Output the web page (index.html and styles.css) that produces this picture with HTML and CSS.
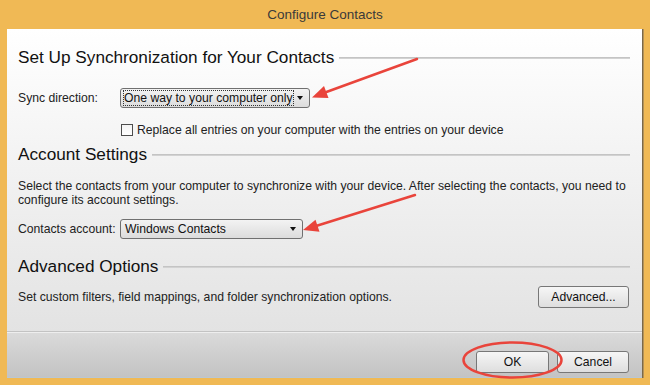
FILE: index.html
```html
<!DOCTYPE html>
<html lang="en">
<head>
    <meta charset="utf-8">
    <title>Configure Contacts</title>
    <link rel="stylesheet" href="styles.css">
</head>
<body>
    <div class="window">
        <div class="titlebar">Configure Contacts</div>
        <div class="client">
            <div class="content">
                <div class="section-head">
                    <span>Set Up Synchronization for Your Contacts</span>
                    <div class="rule"></div>
                </div>
                <div class="field-row sync-row">
                    <label class="field-label">Sync direction:</label>
                    <div class="combo combo-sync"><span class="focus-text">One way to your computer only</span><span class="combo-arrow"></span></div>
                </div>
                <div class="check-row">
                    <span class="checkbox"></span>
                    <span>Replace all entries on your computer with the entries on your device</span>
                </div>

                <div class="section-head head-account">
                    <span>Account Settings</span>
                    <div class="rule"></div>
                </div>
                <p class="desc">Select the contacts from your computer to synchronize with your device. After selecting the contacts, you need to configure its account settings.</p>
                <div class="field-row account-row">
                    <label class="field-label">Contacts account:</label>
                    <div class="combo combo-account"><span>Windows Contacts</span><span class="combo-arrow"></span></div>
                </div>

                <div class="section-head head-advanced">
                    <span>Advanced Options</span>
                    <div class="rule"></div>
                </div>
                <div class="advanced-row">
                    <span>Set custom filters, field mappings, and folder synchronization options.</span>
                    <button class="btn btn-advanced">Advanced...</button>
                </div>
            </div>
            <div class="footer">
                <button class="btn btn-ok">OK</button>
                <button class="btn btn-cancel">Cancel</button>
            </div>
        </div>
    </div>

    <!-- red annotations drawn over the screenshot -->
    <svg class="marks" width="650" height="385" viewBox="0 0 650 385">
        <g stroke="#e9443b" stroke-width="2.5" fill="none" stroke-linecap="round">
            <line x1="417" y1="59" x2="325" y2="92.5"/>
            <line x1="415" y1="195" x2="316" y2="226"/>
            <ellipse cx="512.5" cy="360" rx="49" ry="17.5"/>
        </g>
        <g fill="#e9443b">
            <polygon points="312,97.5 328.5,98 324,86"/>
            <polygon points="303,230 319.5,231.8 315.5,219.8"/>
        </g>
    </svg>
</body>
</html>
```

FILE: styles.css
```css
* {
    box-sizing: border-box;
}

body {
    margin: 0;
    width: 650px;
    height: 385px;
    background: #f0b955;
    font-family: 'Liberation Sans', Arial, sans-serif;
    font-size: 12.2px;
    color: #222;
    overflow: hidden;
}

.window {
    display: flex;
    flex-direction: column;
    height: 385px;
    padding: 0 7px 7px;
}

.titlebar {
    height: 29px;
    line-height: 30px;
    text-align: center;
    font-size: 13.5px;
    color: #3a3a3a;
}

.client {
    flex: 1;
    display: flex;
    flex-direction: column;
    border-right: 1px solid #7a6848;
    box-shadow: 1px 0 0 #b49257;
}

.content {
    flex: 1;
    padding: 18px 12px 0 11px;
    background: linear-gradient(#ffffff, #e3e3e3);
    border-bottom: 1px solid #c3c3c3;
}

.section-head {
    display: flex;
    align-items: center;
    gap: 5px;
    height: 20px;
    font-size: 17.2px;
    color: #111;
}

.rule {
    flex: 1;
    height: 2px;
    margin-top: 2px;
    background: #d2d2d2;
    border-top: 1px solid #c4c4c4;
}

.field-row {
    display: flex;
    align-items: center;
    height: 20px;
}

.field-label {
    width: 102px;
}

.sync-row {
    margin-top: 21px;
}

.combo {
    display: flex;
    align-items: center;
    justify-content: space-between;
    height: 20px;
    padding: 0 6px 0 3px;
    border: 1px solid #707070;
    border-radius: 3px;
    background: linear-gradient(#f3f3f3, #dcdcdc);
    color: #111;
}

.combo-sync {
    width: 190px;
}

.combo-account {
    width: 183px;
    padding-left: 4px;
}

.focus-text {
    outline: 1px dotted #333;
    outline-offset: 0;
    line-height: 14px;
}

.combo-arrow {
    width: 0;
    height: 0;
    border-left: 3.5px solid transparent;
    border-right: 3.5px solid transparent;
    border-top: 4px solid #111;
}

.check-row {
    display: flex;
    align-items: center;
    gap: 4px;
    height: 16px;
    margin: 14px 0 0 103px;
}

.checkbox {
    width: 12px;
    height: 12px;
    border: 1px solid #4d4d4d;
    background: linear-gradient(#f4f4f4, #ffffff);
}

.head-account {
    margin-top: 6px;
}

.desc {
    margin: 15px 0 0;
    line-height: 14px;
    padding-right: 2px;
}

.account-row {
    margin-top: 12px;
}

.head-advanced {
    margin-top: 17px;
}

.advanced-row {
    display: flex;
    align-items: center;
    justify-content: space-between;
    height: 22px;
    margin-top: 10px;
    padding-right: 1px;
}

.btn {
    height: 22px;
    padding: 0;
    border: 1px solid #777;
    border-radius: 3px;
    background: linear-gradient(#f6f6f6, #dedede);
    font-family: 'Liberation Sans', Arial, sans-serif;
    font-size: 12.2px;
    color: #111;
}

.btn-advanced {
    width: 91px;
}

.footer {
    height: 46px;
    display: flex;
    justify-content: flex-end;
    align-items: flex-end;
    gap: 8px;
    padding: 0 13px 4px 0;
    background: linear-gradient(#dadada, #c3c3c3);
    border-top: 1px solid #eeeeee;
    border-bottom: 1px solid #b9c7d3;
}

.btn-ok {
    width: 73px;
}

.btn-cancel {
    width: 72px;
}

.marks {
    position: absolute;
    left: 0;
    top: 0;
    pointer-events: none;
}
```
